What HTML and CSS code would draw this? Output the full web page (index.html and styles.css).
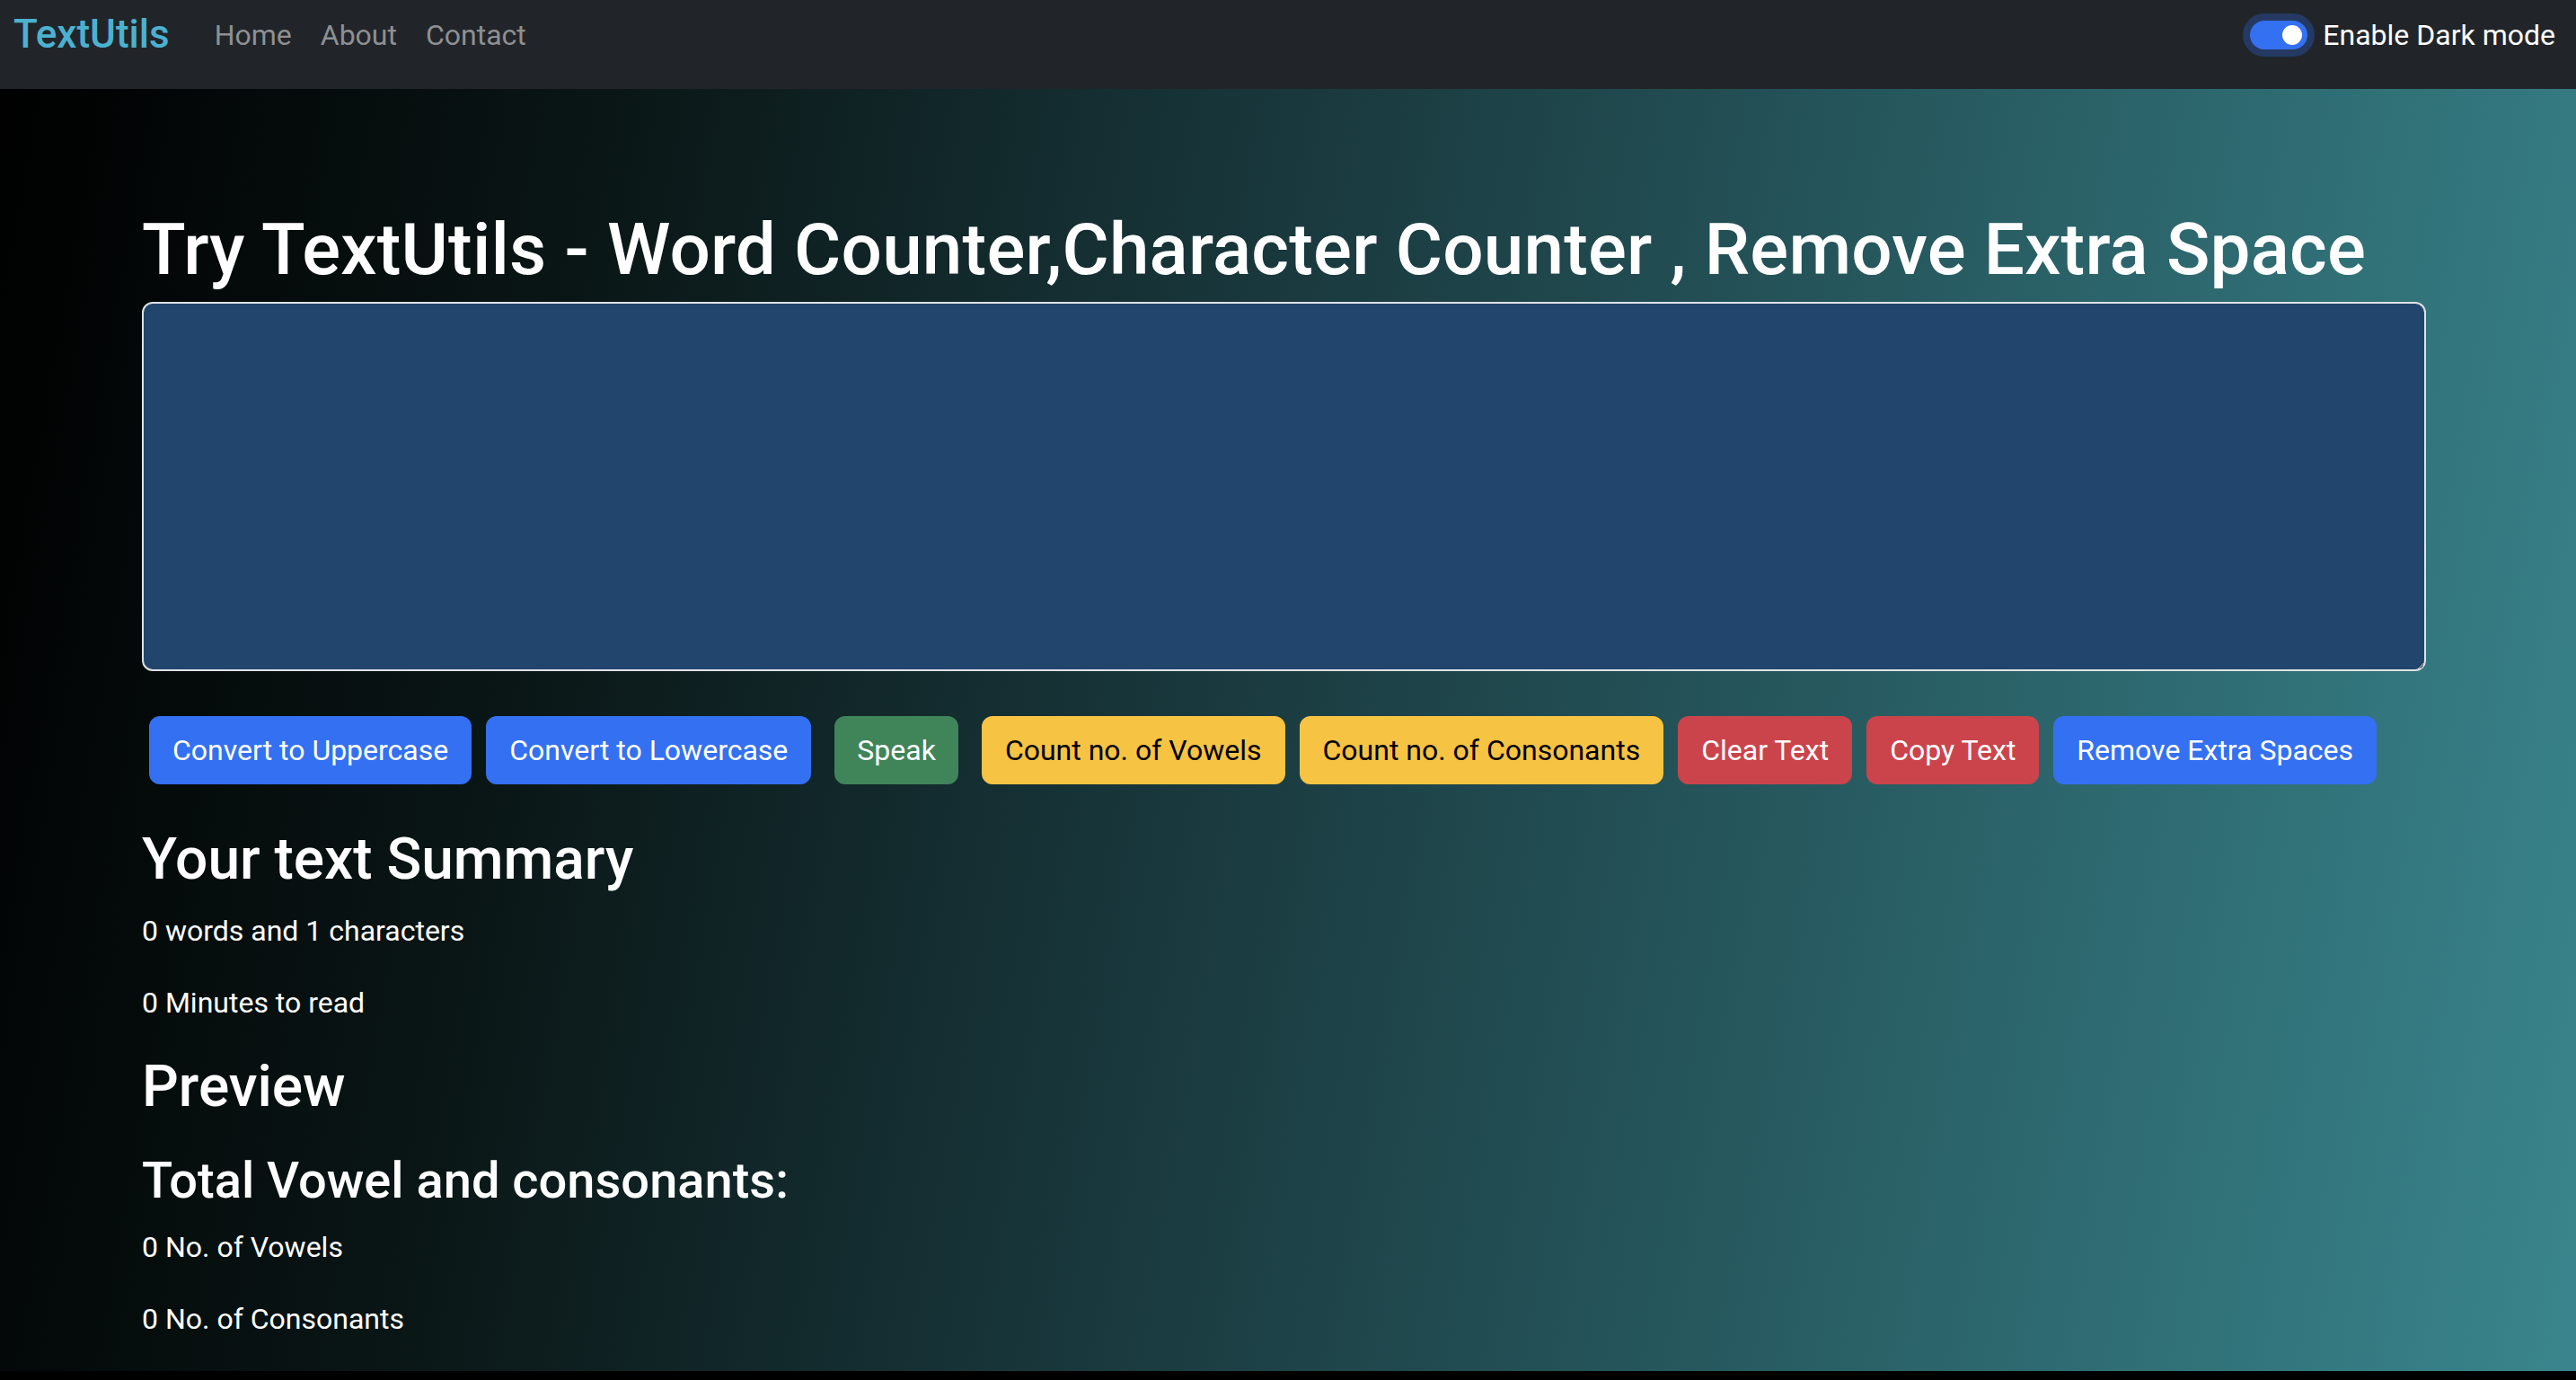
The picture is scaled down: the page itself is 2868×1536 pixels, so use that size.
FILE: index.html
```html
<!DOCTYPE html>
<html lang="en">
<head>
<meta charset="utf-8">
<title>TextUtils</title>
<link rel="stylesheet" href="styles.css">
</head>
<body>
<nav class="navbar">
  <div class="nav-left">
    <a class="brand" href="#">TextUtils</a>
    <ul class="nav-links">
      <li><a href="#">Home</a></li>
      <li><a href="#">About</a></li>
      <li><a href="#">Contact</a></li>
    </ul>
  </div>
  <div class="switch-wrap">
    <span class="switch"><span class="knob"></span></span>
    <label class="switch-label">Enable Dark mode</label>
  </div>
</nav>
<main class="main">
  <div class="container">
    <h1 class="title">Try TextUtils - Word Counter,Character Counter , Remove Extra Space</h1>
    <textarea class="textbox" rows="8"></textarea>
    <div class="btn-row">
      <button class="btn btn-blue">Convert to Uppercase</button>
      <button class="btn btn-blue">Convert to Lowercase</button>
      <button class="btn btn-green btn-speak">Speak</button>
      <button class="btn btn-yellow">Count no. of Vowels</button>
      <button class="btn btn-yellow">Count no. of Consonants</button>
      <button class="btn btn-red">Clear Text</button>
      <button class="btn btn-red">Copy Text</button>
      <button class="btn btn-blue">Remove Extra Spaces</button>
    </div>
    <section class="summary">
      <h2 class="h2">Your text Summary</h2>
      <p class="para">0 words and 1 characters</p>
      <p class="para">0 Minutes to read</p>
      <h2 class="h2">Preview</h2>
      <p class="para empty"></p>
      <h3 class="h3">Total Vowel and consonants:</h3>
      <p class="para">0 No. of Vowels</p>
      <p class="para">0 No. of Consonants</p>
    </section>
  </div>
</main>
</body>
</html>
```
FILE: styles.css
```css
* { box-sizing: border-box; }
html, body {
  margin: 0;
  padding: 0;
  background: #000;
  font-family: Roboto, "Liberation Sans", Arial, sans-serif;
  color: #fff;
}
.navbar {
  height: 99px;
  background: #212529;
  display: flex;
  align-items: center;
  justify-content: space-between;
  padding: 0 23px 22px 15px;
}
.nav-left {
  display: flex;
  align-items: center;
}
.brand {
  font-size: 44px;
  font-weight: 500;
  color: #4cb1d0;
  text-decoration: none;
  margin-right: 34px;
  line-height: 1.2;
}
.nav-links {
  display: flex;
  list-style: none;
  margin: 0;
  padding: 0;
}
.nav-links a {
  display: block;
  padding: 16px 16px;
  font-size: 32px;
  line-height: 48px;
  color: #8e9092;
  text-decoration: none;
}
.switch-wrap {
  display: flex;
  align-items: center;
}
.switch {
  width: 64px;
  height: 32px;
  border-radius: 16px;
  background: #3470f2;
  box-shadow: 0 0 0 8px #243a63;
  display: flex;
  align-items: center;
  justify-content: flex-end;
  padding-right: 6px;
}
.knob {
  width: 22px;
  height: 22px;
  border-radius: 50%;
  background: #fff;
}
.switch-label {
  margin-left: 17px;
  font-size: 32px;
  line-height: 48px;
  color: #fff;
}
.main {
  background: linear-gradient(100deg, #000 0%, #0a1616 22%, #1b3d42 50%, #2a6268 75%, #3a858d 100%);
  padding: 131px 0 2px 158px;
}
.container {
  width: 2543px;
}
.title {
  margin: 0 0 10px;
  font-size: 80px;
  font-weight: 500;
  line-height: 1.2;
  letter-spacing: 0.2px;
  white-space: nowrap;
}
.textbox {
  display: block;
  width: 2543px;
  height: 411px;
  background: #22456e;
  border: 2px solid #dee2e6;
  border-radius: 12px;
  color: #fff;
  font-family: inherit;
  font-size: 32px;
  padding: 12px 24px;
  margin: 0;
}
.btn-row {
  display: flex;
  gap: 16px;
  margin: 50px 0 0 8px;
}
.btn {
  font-family: inherit;
  font-size: 32px;
  line-height: 48px;
  padding: 12px 24px;
  border: 2px solid transparent;
  border-radius: 12px;
  color: #fff;
  white-space: nowrap;
}
.btn-blue { background: #3470f2; border-color: #3470f2; }
.btn-green { background: #40845a; border-color: #40845a; }
.btn-yellow { background: #f7c343; border-color: #f7c343; color: #000; }
.btn-red { background: #cb444b; border-color: #cb444b; }
.btn-speak { margin: 0 10px; padding: 12px 23px; }
.summary {
  margin-top: 46px;
}
.h2 {
  margin: 0 0 16px;
  font-size: 64px;
  font-weight: 500;
  line-height: 1.2;
}
.h3 {
  margin: 0 0 16px;
  font-size: 56px;
  font-weight: 500;
  line-height: 1.2;
}
.para {
  margin: 0 0 32px;
  font-size: 32px;
  line-height: 48px;
}
.empty { height: 0; }
```
